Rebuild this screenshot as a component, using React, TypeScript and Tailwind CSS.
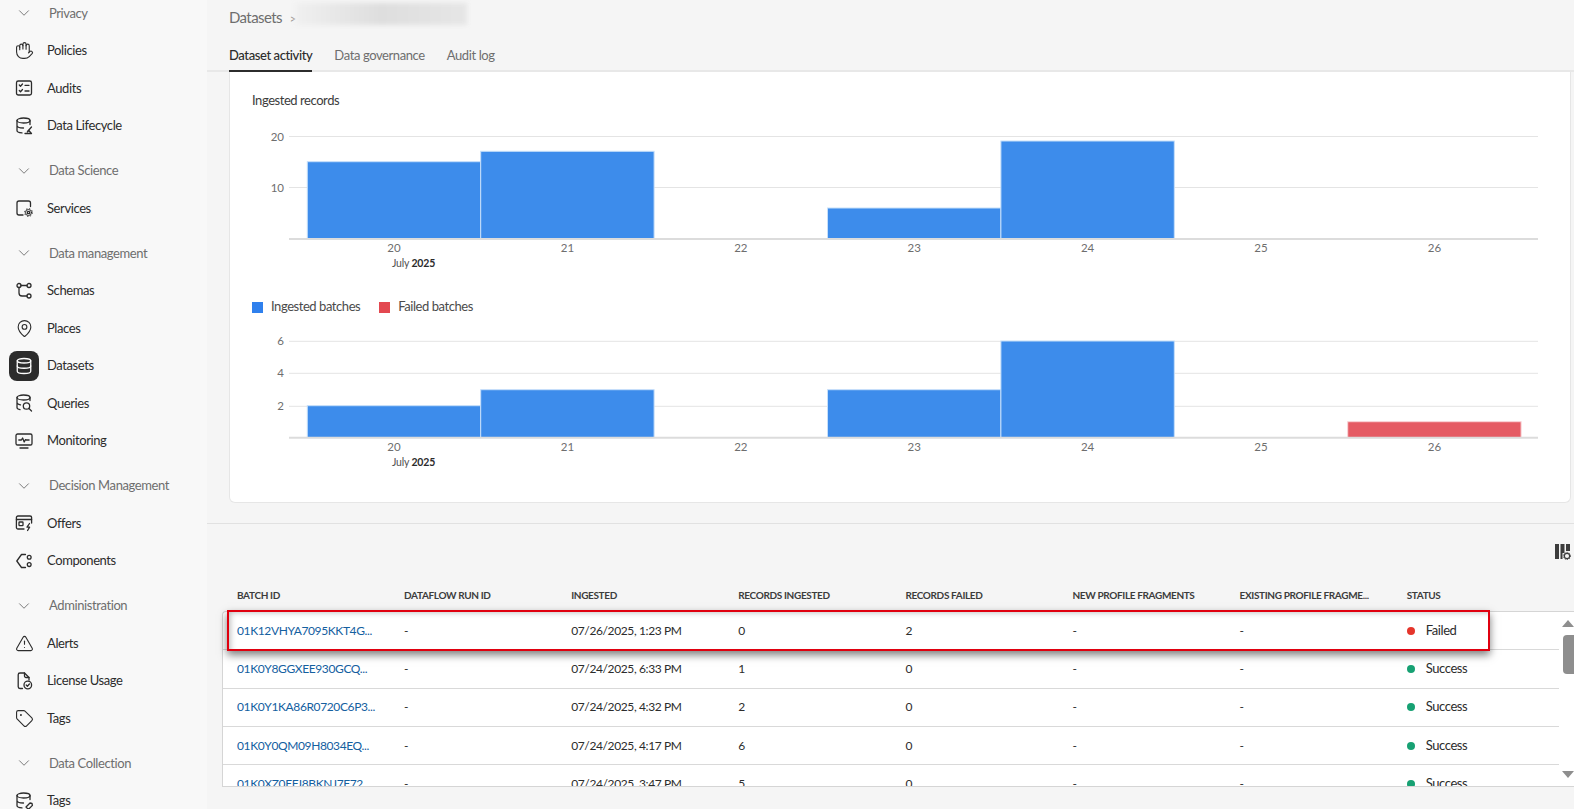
import React from 'react';
import { Hand, MapPin, Database, TriangleAlert, Tag, ChevronDown } from 'lucide-react';

const FONT = "font-['Lato','Open_Sans',sans-serif]";

// Small inline icons for the ones lucide has no match for
const Svg: React.FC<{ children: React.ReactNode }> = ({ children }) => (
  <svg width="20" height="20" viewBox="0 0 20 20" fill="none" stroke="currentColor" strokeWidth="1.3" strokeLinecap="round" strokeLinejoin="round">
    {children}
  </svg>
);

const DbTop = () => (
  <>
    <ellipse cx="9.5" cy="4.5" rx="6.5" ry="2.5" />
    <path d="M3 4.5v10c0 1.2 2 2.2 5 2.4M16 4.5v4M3 9.5c0 1.3 2.8 2.5 6.5 2.5" />
  </>
);

const Audits = () => (
  <Svg>
    <rect x="2.5" y="3" width="15" height="14" rx="1.8" />
    <path d="M5.3 7l1.2 1.2 2-2.2M5.3 12.5l1.2 1.2 2-2.2M11 7.3h4M11 13h4" />
  </Svg>
);
const Lifecycle = () => (
  <Svg>
    <DbTop />
    <path d="M11 17.5h6.5l-2.7-3-1.5 1.4" />
    <path d="M17.5 11l-3.5 4" />
  </Svg>
);
const Services = () => (
  <Svg>
    <path d="M9 17H5a2 2 0 0 1-2-2V5a2 2 0 0 1 2-2h9.5a2 2 0 0 1 2 2v3.5" />
    <circle cx="14.5" cy="14.5" r="1.2" />
    <circle cx="14.5" cy="14.5" r="3" strokeWidth="1" />
    <circle cx="14.5" cy="14.5" r="3.9" strokeWidth="1" strokeDasharray="1.4 1.66" strokeLinecap="butt" />
  </Svg>
);
const Schemas = () => (
  <Svg>
    <circle cx="5" cy="4.5" r="2" />
    <circle cx="15" cy="4.5" r="2" />
    <circle cx="15" cy="15" r="2" />
    <path d="M7 4.5h6M5 6.5v5.5a3 3 0 0 0 3 3h5" />
  </Svg>
);
const Queries = () => (
  <Svg>
    <ellipse cx="9.5" cy="4.5" rx="6.5" ry="2.5" />
    <path d="M3 4.5v10c0 1 1.2 1.8 3 2.2M16 4.5v3M3 9.5c0 1 1.4 1.9 3.5 2.3" />
    <circle cx="12.5" cy="13" r="3.2" />
    <path d="M15 15.5l2.5 2.5" />
  </Svg>
);
const Monitoring = () => (
  <Svg>
    <rect x="2" y="3" width="16" height="11" rx="1.6" />
    <path d="M6 17h8M4.8 9h2.6l1.2-2 1.6 4 1.3-2.4.7.4h2.9" />
  </Svg>
);
const Offers = () => (
  <Svg>
    <path d="M10 16H4a1.6 1.6 0 0 1-1.6-1.6V4.6A1.6 1.6 0 0 1 4 3h12a1.6 1.6 0 0 1 1.6 1.6V10" />
    <path d="M2.4 6.5h15.2" />
    <rect x="5" y="9" width="4" height="3.6" rx=".6" />
    <path d="M15.5 10.5l-2.5 3.7h2.6l-2 3.3" />
  </Svg>
);
const Components = () => (
  <Svg>
    <path d="M11.5 3.5H7.5L2.8 10l4.7 6.5h4" />
    <circle cx="15.2" cy="6.2" r="1.9" />
    <circle cx="15.2" cy="13.6" r="1.9" />
  </Svg>
);
const License = () => (
  <Svg>
    <path d="M8.5 17.5H6a1.8 1.8 0 0 1-1.8-1.8V3.8A1.8 1.8 0 0 1 6 2h4.5l4.5 4.5v2.5" />
    <path d="M10.5 2v3a1.5 1.5 0 0 0 1.5 1.5h3" />
    <circle cx="13.8" cy="14" r="3.8" />
    <path d="M12.2 14l1.2 1.2 2-2.2" />
  </Svg>
);
const DataTags = () => (
  <Svg>
    <DbTop />
    <path d="M12 16l4-4 2 .4.4 2-4 4z" />
  </Svg>
);
const Columns = () => (
  <svg width="16" height="16" viewBox="0 0 16 16" fill="#3c3c3c">
    <rect x="0" y="0" width="4" height="15" />
    <rect x="5.5" y="0" width="4" height="9" />
    <rect x="5.5" y="9" width="2" height="6" />
    <rect x="11" y="0" width="4" height="7" />
    <circle cx="12" cy="12" r="2.6" fill="none" stroke="#3c3c3c" strokeWidth="1.1" />
    <circle cx="12" cy="12" r="3.6" fill="none" stroke="#3c3c3c" strokeWidth="1" strokeDasharray="1.1 1.2" />
  </svg>
);

type NavEntry = { head: string } | { label: string; icon: React.ReactNode; active?: boolean };

const lu = { size: 19, strokeWidth: 1.4 };

const NAV: NavEntry[] = [
  { head: 'Privacy' },
  { label: 'Policies', icon: <Hand {...lu} className="-scale-x-100" /> },
  { label: 'Audits', icon: <Audits /> },
  { label: 'Data Lifecycle', icon: <Lifecycle /> },
  { head: 'Data Science' },
  { label: 'Services', icon: <Services /> },
  { head: 'Data management' },
  { label: 'Schemas', icon: <Schemas /> },
  { label: 'Places', icon: <MapPin {...lu} /> },
  { label: 'Datasets', icon: <Database size={18} strokeWidth={1.7} />, active: true },
  { label: 'Queries', icon: <Queries /> },
  { label: 'Monitoring', icon: <Monitoring /> },
  { head: 'Decision Management' },
  { label: 'Offers', icon: <Offers /> },
  { label: 'Components', icon: <Components /> },
  { head: 'Administration' },
  { label: 'Alerts', icon: <TriangleAlert {...lu} /> },
  { label: 'License Usage', icon: <License /> },
  { label: 'Tags', icon: <Tag {...lu} /> },
  { head: 'Data Collection' },
  { label: 'Tags', icon: <DataTags /> },
];

const Sidebar = () => (
  <aside className="w-[207px] shrink-0 bg-[#f8f8f8] -mt-[5.5px] tracking-[-0.4px]">
    {NAV.map((n, i) =>
      'head' in n ? (
        <div key={i} className={`flex items-center h-[37.5px] gap-[10px] pl-[9px] text-[13px] text-[#6e6e6e] ${i > 0 ? 'mt-[7.5px]' : ''}`}>
          <span className="w-[30px] flex items-center justify-center">
            <ChevronDown size={18} strokeWidth={1.2} />
          </span>
          {n.head}
        </div>
      ) : (
        <div key={i} className="flex items-center h-[37.5px] gap-[8px] pl-[9px] text-[13px] text-[#2c2c2c]">
          <span className={`w-[30px] h-[30px] rounded-lg flex items-center justify-center ${n.active ? 'bg-[#2c2c2c] text-white' : 'text-[#2c2c2c]'}`}>
            {n.icon}
          </span>
          {n.label}
        </div>
      ),
    )}
  </aside>
);

const DAYS = ['20', '21', '22', '23', '24', '25', '26'];
const BAR_W = 173.4;
const BAR_X = 55.3; // first bar's left edge inside the svg

interface ChartProps {
  height: number;
  ticks: { label: string; y: number }[];
  axisY: number;
  bars: { day: number; top: number; red?: boolean }[];
}

const BarChart: React.FC<ChartProps> = ({ height, ticks, axisY, bars }) => (
  <svg width="1300" height={height} className="block">
    {ticks.map((t) => (
      <g key={t.label}>
        <line x1="37" x2="1286" y1={t.y} y2={t.y} stroke="#e4e4e4" strokeWidth="1" />
        <text x="32" y={t.y + 4} textAnchor="end" fontSize="11.5" fill="#6e6e6e">{t.label}</text>
      </g>
    ))}
    {bars.map((b) => (
      <rect
        key={b.day}
        x={BAR_X + b.day * BAR_W}
        y={b.top}
        width={BAR_W}
        height={axisY - b.top}
        fill={b.red ? '#e55b64' : '#3d8ceb'}
        stroke={b.red ? '#f9d5d8' : '#c6dffa'}
        strokeWidth="1"
      />
    ))}
    <line x1="37" x2="1286" y1={axisY} y2={axisY} stroke="#dcdcdc" strokeWidth="2" />
    {DAYS.map((d, i) => (
      <text key={d} x={142 + i * BAR_W} y={axisY + 13} textAnchor="middle" fontSize="11.5" fill="#6e6e6e">{d}</text>
    ))}
    <text x="140" y={axisY + 28} fontSize="10.5" letterSpacing="-0.2" fill="#505050">
      July <tspan fontWeight="700" fill="#2c2c2c">2025</tspan>
    </text>
  </svg>
);

const COLS = ['BATCH ID', 'DATAFLOW RUN ID', 'INGESTED', 'RECORDS INGESTED', 'RECORDS FAILED', 'NEW PROFILE FRAGMENTS', 'EXISTING PROFILE FRAGME...', 'STATUS'];

const ROWS = [
  { id: '01K12VHYA7095KKT4G...', at: '07/26/2025, 1:23 PM', rec: 0, fail: 2, ok: false },
  { id: '01K0Y8GGXEE930GCQ...', at: '07/24/2025, 6:33 PM', rec: 1, fail: 0, ok: true },
  { id: '01K0Y1KA86R0720C6P3...', at: '07/24/2025, 4:32 PM', rec: 2, fail: 0, ok: true },
  { id: '01K0Y0QM09H8034EQ...', at: '07/24/2025, 4:17 PM', rec: 6, fail: 0, ok: true },
  { id: '01K0XZ0EFJ8BKNJ7F72...', at: '07/24/2025, 3:47 PM', rec: 5, fail: 0, ok: true },
];

const Cell: React.FC<{ children: React.ReactNode }> = ({ children }) => (
  <div className="w-[167.1px] pl-[15px] shrink-0 whitespace-nowrap">{children}</div>
);

const BatchTable = () => (
  <div className="relative">
    <div className="flex items-center ml-[15px] mt-[2px] h-[20px] text-[10px] tracking-[-0.35px] font-bold text-[#3c3c3c]">
      {COLS.map((c) => (
        <Cell key={c}>{c}</Cell>
      ))}
    </div>
    <div className="ml-[15px] mt-[6px] h-[176px] flex border border-r-0 border-[#d5d5d5] rounded-tl-sm overflow-hidden bg-white">
      <div className="flex-1 overflow-hidden -ml-px">
        {ROWS.map((r) => (
          <div key={r.id} className="flex items-center h-[38.3px] shrink-0 border-b border-[#d9d9d9] text-[12px] tracking-[-0.38px] text-[#2c2c2c]">
            <Cell><span className="text-[#14609f]">{r.id}</span></Cell>
            <Cell>-</Cell>
            <Cell>{r.at}</Cell>
            <Cell>{r.rec}</Cell>
            <Cell>{r.fail}</Cell>
            <Cell>-</Cell>
            <Cell>-</Cell>
            <Cell>
              <span className="flex items-center gap-[11px] text-[13px] tracking-[-0.4px]">
                <span className={`w-[8px] h-[8px] rounded-full ${r.ok ? 'bg-[#17a173]' : 'bg-[#e5352b]'}`} />
                {r.ok ? 'Success' : 'Failed'}
              </span>
            </Cell>
          </div>
        ))}
      </div>
      <div className="w-[15px] shrink-0 flex flex-col items-end bg-white pt-[8px] pb-[8px]">
        <span className="w-0 h-0 border-x-[6px] border-x-transparent border-b-[7px] border-b-[#8e8e8e]" />
        <span className="w-[11px] h-[39px] mt-[8px] bg-[#8e8e8e] rounded-l-[4px]" />
        <span className="flex-1" />
        <span className="w-0 h-0 border-x-[6px] border-x-transparent border-t-[7px] border-t-[#8e8e8e]" />
      </div>
    </div>
    {/* annotation drawn over the first row */}
    <div className="absolute left-[20px] top-[27px] w-[1263px] h-[41px] border-2 border-[#e0000f] shadow-[0_4px_8px_rgba(0,0,0,0.5),inset_4px_3px_6px_-3px_rgba(0,0,0,0.3)]" />
  </div>
);

export default function App() {
  return (
    <div className={`flex h-[809px] w-[1574px] overflow-hidden bg-[#f5f5f5] ${FONT}`}>
      <Sidebar />
      <main className="flex-1 min-w-0 flex flex-col">
        <header className="h-[72px] border-b-2 border-[#e8e8e8] pl-[22px]">
          <div className="flex items-center h-[34px] text-[#6e6e6e]">
            <span className="text-[15px] tracking-[-0.6px]">Datasets</span>
            <span className="ml-[8px] w-[5px] text-[11px] mt-[4px] text-[#8e8e8e]">&gt;</span>
            <span className="-mt-[6px] w-[172px] h-[22px] bg-gradient-to-r from-[#f0f0f0] via-[#dedede] to-[#e6e6e6] blur-[2px]" />
          </div>
          <nav className="flex gap-[22px] h-[38px] pt-[6px] text-[13px] tracking-[-0.4px] text-[#6e6e6e]">
            <span className="h-[32px] leading-[30px] border-b-2 border-[#2c2c2c] text-[#2c2c2c] font-medium">Dataset activity</span>
            <span className="h-[32px] leading-[30px]">Data governance</span>
            <span className="h-[32px] leading-[30px]">Audit log</span>
          </nav>
        </header>

        <section className="ml-[22px] mr-[3px] h-[431px] bg-white border-x border-b border-[#e6e6e6] rounded-b-md pl-[22px] pt-[18px]">
          <h2 className="h-[20px] leading-[20px] text-[13px] tracking-[-0.44px] font-normal text-[#3c3c3c]">Ingested records</h2>
          <div className="mt-[15px]">
            <BarChart
              height={150}
              axisY={114}
              ticks={[{ label: '20', y: 11.5 }, { label: '10', y: 62.5 }]}
              bars={[
                { day: 0, top: 36.7 },
                { day: 1, top: 26.3 },
                { day: 3, top: 83 },
                { day: 4, top: 16 },
              ]}
            />
          </div>
          <div className="mt-[22px] flex items-center h-[20px] text-[13px] tracking-[-0.44px] text-[#4b4b4b]">
            <span className="w-[11px] h-[11px] bg-[#2f80ed]" />
            <span className="ml-[8px]">Ingested batches</span>
            <span className="ml-[19px] w-[11px] h-[11px] bg-[#e34850]" />
            <span className="ml-[8px]">Failed batches</span>
          </div>
          <div className="mt-[13px]">
            <BarChart
              height={145}
              axisY={107.7}
              ticks={[{ label: '6', y: 11.3 }, { label: '4', y: 43.3 }, { label: '2', y: 76.3 }]}
              bars={[
                { day: 0, top: 75.7 },
                { day: 1, top: 59.7 },
                { day: 3, top: 59.7 },
                { day: 4, top: 11 },
                { day: 6, top: 91.7, red: true },
              ]}
            />
          </div>
        </section>

        <div className="mt-[20px] border-t border-[#e1e1e1] pt-[20px] pr-[3px] flex justify-end h-[60px]">
          <Columns />
        </div>
        <BatchTable />
      </main>
    </div>
  );
}
